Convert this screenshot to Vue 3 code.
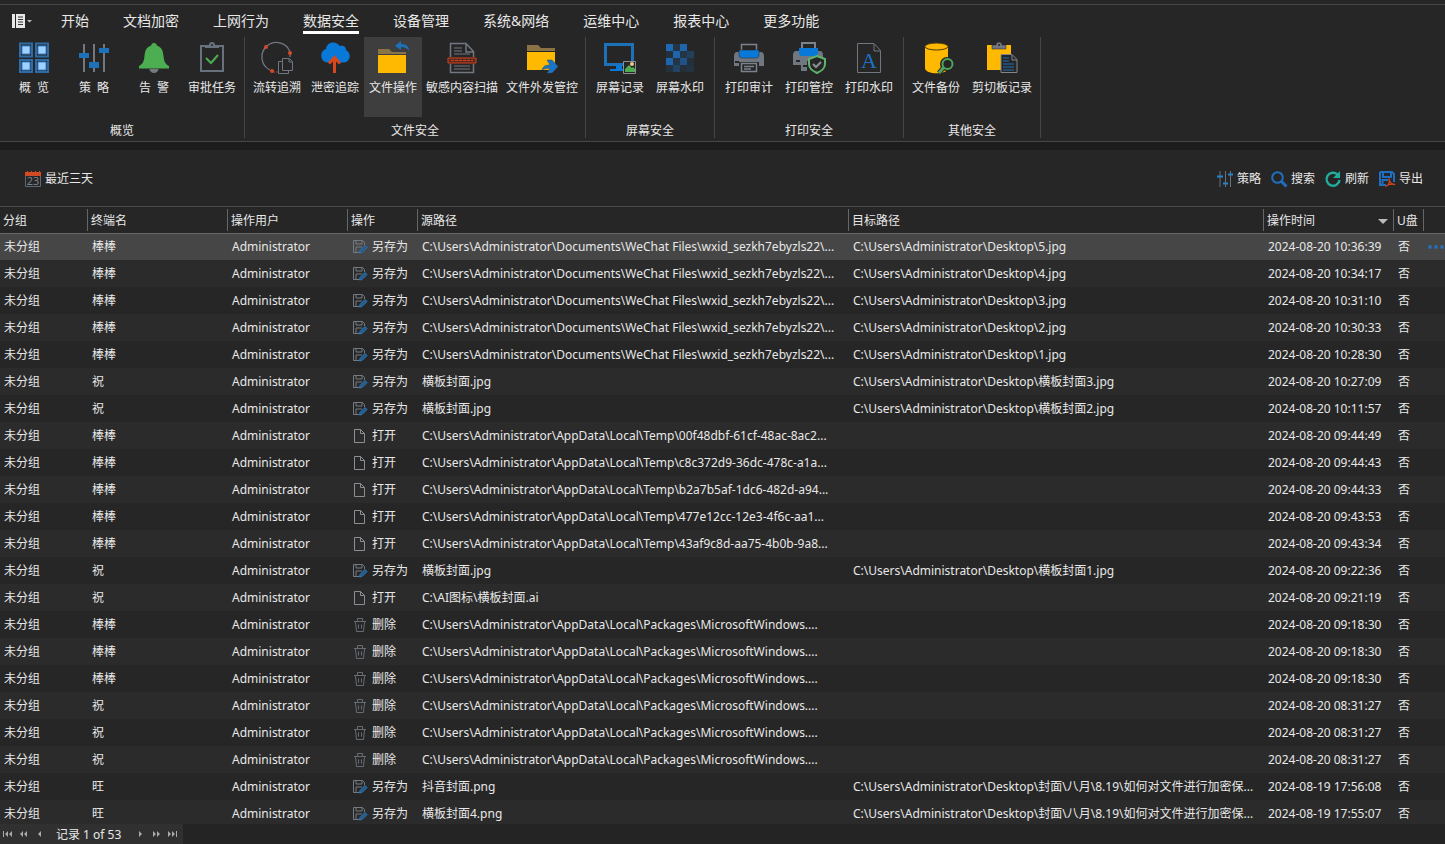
<script setup>
import { ref } from 'vue'

const tabs = ['开始', '文档加密', '上网行为', '数据安全', '设备管理', '系统&网络', '运维中心', '报表中心', '更多功能']
const activeTab = ref('数据安全')
const activeTool = ref('文件操作')

const groups = [
  {
    name: '概览', pad: 'pad-4',
    items: [
      { label: '概  览', icon: 'overview', size: 'normal' },
      { label: '策  略', icon: 'policy', size: 'normal' },
      { label: '告  警', icon: 'bell', size: 'normal' },
      { label: '审批任务', icon: 'task', size: 'small' }
    ]
  },
  {
    name: '文件安全', pad: 'pad-3',
    items: [
      { label: '流转追溯', icon: 'flow', size: 'compact' },
      { label: '泄密追踪', icon: 'cloud', size: 'compact' },
      { label: '文件操作', icon: 'folder', size: 'compact' },
      { label: '敏感内容扫描', icon: 'scan', size: 'wide' },
      { label: '文件外发管控', icon: 'send', size: 'wide' }
    ]
  },
  {
    name: '屏幕安全', pad: 'pad-4',
    items: [
      { label: '屏幕记录', icon: 'screen', size: 'normal' },
      { label: '屏幕水印', icon: 'mosaic', size: 'normal' }
    ]
  },
  {
    name: '打印安全', pad: 'pad-4',
    items: [
      { label: '打印审计', icon: 'printer', size: 'normal' },
      { label: '打印管控', icon: 'printguard', size: 'normal' },
      { label: '打印水印', icon: 'printmark', size: 'normal' }
    ]
  },
  {
    name: '其他安全', pad: 'pad-2',
    items: [
      { label: '文件备份', icon: 'backup', size: 'normal' },
      { label: '剪切板记录', icon: 'clipboard', size: 'medium' }
    ]
  }
]

const desktop = 'C:\\Users\\Administrator\\Desktop\\'
const wechat = 'C:\\Users\\Administrator\\Documents\\WeChat Files\\wxid_sezkh7ebyzls22\\...'
const temp = 'C:\\Users\\Administrator\\AppData\\Local\\Temp\\'
const pkg = 'C:\\Users\\Administrator\\AppData\\Local\\Packages\\MicrosoftWindows....'
const longTarget = desktop + '封面\\八月\\8.19\\如何对文件进行加密保...'

const rows = [
  ['棒棒', '另存为', wechat, desktop + '5.jpg', '2024-08-20 10:36:39'],
  ['棒棒', '另存为', wechat, desktop + '4.jpg', '2024-08-20 10:34:17'],
  ['棒棒', '另存为', wechat, desktop + '3.jpg', '2024-08-20 10:31:10'],
  ['棒棒', '另存为', wechat, desktop + '2.jpg', '2024-08-20 10:30:33'],
  ['棒棒', '另存为', wechat, desktop + '1.jpg', '2024-08-20 10:28:30'],
  ['祝', '另存为', '横板封面.jpg', desktop + '横板封面3.jpg', '2024-08-20 10:27:09'],
  ['祝', '另存为', '横板封面.jpg', desktop + '横板封面2.jpg', '2024-08-20 10:11:57'],
  ['棒棒', '打开', temp + '00f48dbf-61cf-48ac-8ac2...', '', '2024-08-20 09:44:49'],
  ['棒棒', '打开', temp + 'c8c372d9-36dc-478c-a1a...', '', '2024-08-20 09:44:43'],
  ['棒棒', '打开', temp + 'b2a7b5af-1dc6-482d-a94...', '', '2024-08-20 09:44:33'],
  ['棒棒', '打开', temp + '477e12cc-12e3-4f6c-aa1...', '', '2024-08-20 09:43:53'],
  ['棒棒', '打开', temp + '43af9c8d-aa75-4b0b-9a8...', '', '2024-08-20 09:43:34'],
  ['祝', '另存为', '横板封面.jpg', desktop + '横板封面1.jpg', '2024-08-20 09:22:36'],
  ['祝', '打开', 'C:\\AI图标\\横板封面.ai', '', '2024-08-20 09:21:19'],
  ['棒棒', '删除', pkg, '', '2024-08-20 09:18:30'],
  ['棒棒', '删除', pkg, '', '2024-08-20 09:18:30'],
  ['棒棒', '删除', pkg, '', '2024-08-20 09:18:30'],
  ['祝', '删除', pkg, '', '2024-08-20 08:31:27'],
  ['祝', '删除', pkg, '', '2024-08-20 08:31:27'],
  ['祝', '删除', pkg, '', '2024-08-20 08:31:27'],
  ['旺', '另存为', '抖音封面.png', longTarget, '2024-08-19 17:56:08'],
  ['旺', '另存为', '横板封面4.png', longTarget, '2024-08-19 17:55:07']
]
const selected = ref(0)

const mosaic = [
  [2, 2, 0.9], [16, 2, 0.85], [9, 2, 0.2], [9, 9, 0.85], [23, 9, 0.35], [2, 9, 0.15], [16, 9, 0.2],
  [2, 16, 0.85], [16, 16, 0.6], [9, 16, 0.2], [23, 16, 0.12],
  [9, 23, 0.4], [23, 23, 0.18], [2, 23, 0.15], [16, 23, 0.12]
]
</script>

<template>
  <div class="app">
    <header class="ribbon">
      <nav class="tabs">
        <button class="menu" type="button" aria-label="菜单">
          <svg width="20" height="14" viewBox="0 0 20 14">
            <path d="M0 0h3v14H0zM4 0h9v14H4z" fill="#e8e8e8" />
            <path d="M6 3h5M6 5.5h5M6 8h5M6 10.5h5" stroke="#333" />
            <path d="M15 6h5l-2.500 2.500z" fill="#bbb" />
          </svg>
        </button>
        <button v-for="t in tabs" :key="t" type="button" class="tab" :class="{ active: t === activeTab }" @click="activeTab = t">{{ t }}</button>
      </nav>
      <div class="groups">
        <section v-for="g in groups" :key="g.name" class="group" :class="g.pad">
          <div class="items">
            <button v-for="i in g.items" :key="i.label" type="button" class="item" :class="[i.size, { on: i.label === activeTool }]" @click="activeTool = i.label">
              <svg width="32" height="32" viewBox="0 0 32 32" fill="none" aria-hidden="true">
                <g v-if="i.icon === 'overview'">
                  <path d="M2 1.500h12v13H2zM18 1.500h12v13H18zM2 18h12v12H2zM18 18h12v12H18z" stroke="#2d6ca8" stroke-width="2" />
                  <path d="M4 4h8v8H4zM20 4h8v8h-8zM4 20h8v8H4zM20 20h8v8h-8z" fill="#9fd0ff" stroke="#3c86cc" />
                </g>
                <g v-else-if="i.icon === 'policy'">
                  <path d="M6 2v28M16 2v28M26 2v28" stroke="#727780" stroke-width="2" />
                  <path d="M1 11h10v5H1zM11 20h10v6H11zM21 6h10v5H21z" fill="#1d71b8" />
                </g>
                <g v-else-if="i.icon === 'bell'">
                  <path d="M11.500 27h9a4.500 4 0 0 1-9 0z" fill="#727780" />
                  <path d="M16 1c2 0 2.600 1 2.800 2.400C24 5 25 9 25.500 14c.5 5 1.500 8 5.500 10v2.500H1V24c4-2 5-5 5.500-10C7 9 8 5 13.200 3.400 13.400 2 14 1 16 1z" fill="#4cae50" />
                </g>
                <g v-else-if="i.icon === 'task'">
                  <path d="M5 4h22v25H5z" stroke="#68717e" stroke-width="2" />
                  <path d="M9 6V3h4a3 3 0 0 1 6 0h4v3z" fill="#68717e" />
                  <circle cx="16" cy="3" r="1" fill="#262626" />
                  <path d="M10 16l5 5 7-8" stroke="#4cae50" stroke-width="2" />
                </g>
                <g v-else-if="i.icon === 'flow'">
                  <path d="M9 28A14.500 14.500 0 1 1 29 10M29 11v4" stroke="#707780" stroke-width="1.300" />
                  <path d="M12 30h5M29 12v3" stroke="#8c4b3b" stroke-dasharray="2 1" />
                  <circle cx="5" cy="5" r="2" fill="#d34a2b" /><circle cx="29" cy="11" r="2" fill="#d34a2b" /><circle cx="11" cy="29" r="2" fill="#d34a2b" />
                  <path d="M21.500 16.500h7l3 3v9h-10zM28 17v3h3M21 19.500h-3.500v12h10V29" stroke="#707780" />
                </g>
                <g v-else-if="i.icon === 'cloud'">
                  <path d="M8 20.500a7 7 0 0 1-1-13.500C8-1 18-1 20.500 4c5-1 6.500 1.500 6.500 4 6 3 4.500 12-2 12.500h-4L15.500 14l-5.500 6.500z" fill="#0879d8" />
                  <path d="M15.500 31V17M10 21.500l5.500-6 5.500 6" stroke="#d9481d" stroke-width="3" />
                </g>
                <g v-else-if="i.icon === 'folder'">
                  <path d="M1 7h11l3 3h14v2H1z" fill="#8a7345" />
                  <path d="M1 13h28v18H1z" fill="#ffb900" />
                  <path d="M18 4l6-5v3c6 0 8 3 8 7-2-3-4-4-8-4v3z" fill="#1d71b8" />
                </g>
                <g v-else-if="i.icon === 'scan'">
                  <path d="M4.500 15V1.500H20l7.500 8V15M20 2v8h7M4.500 22v8.500h23V22" stroke="#707780" stroke-width="1.500" />
                  <path d="M8 6h8M8 9h8M8 12h16M8 24h16M8 27h16" stroke="#707780" />
                  <path d="M2 16h28v5H2z" fill="#59291f" stroke="#d3451f" />
                  <path d="M5 18.500h22" stroke="#d3451f" stroke-dasharray="3 1" />
                </g>
                <g v-else-if="i.icon === 'send'">
                  <path d="M1 3h11l3 3h14v3H1z" fill="#8a7345" />
                  <path d="M1 10h28v18H1z" fill="#ffb900" />
                  <path d="M16 28c1-4 4-5 8-5l-3-5h5l6 6.500-6 6.500h-5l3-4c-4-1-6 0-8 1z" fill="#1976c8" stroke="#39495a" stroke-width=".5" />
                </g>
                <g v-else-if="i.icon === 'screen'">
                  <path d="M1.500 2.500h27v20h-27z" stroke="#1d71b8" stroke-width="3" />
                  <path d="M12 23h6v4h3v2H6v-2h6z" fill="#0879d8" />
                  <path d="M19.500 19.500h12v12h-12z" fill="#262626" stroke="#8c9096" />
                  <path d="M21 30v-3l4-4 3 3 1-1 2 2v3z" fill="#4cae50" /><circle cx="28" cy="22" r="2" fill="#f0c98a" />
                </g>
                <g v-else-if="i.icon === 'mosaic'">
                  <rect v-for="m in mosaic" :key="m.join()" :x="m[0]" :y="m[1]" width="7" height="7" fill="#1d71c4" :opacity="m[2]" />
                </g>
                <g v-else-if="i.icon === 'printer'">
                  <path d="M8.500 9V2.500h15V9" stroke="#7c828b" stroke-width="1.500" />
                  <path d="M4 10h24c2 0 3 2 3 4v10h-5v-4H6v4H1V14c0-2 1-4 3-4z" fill="#707780" />
                  <path d="M6 8h20v5c0 2-1 3-3 3H9c-2 0-3-1-3-3z" fill="#0879d8" stroke="#262626" stroke-width=".5" />
                  <path d="M8.500 21.500h15v8h-15zM11 24.500h10M11 27h7" stroke="#7c828b" stroke-width="1.500" />
                  <path d="M2 19h4v2H2z" fill="#262626" />
                </g>
                <g v-else-if="i.icon === 'printguard'">
                  <path d="M9 1h13v6H9z" stroke="#7c828b" stroke-width="2" />
                  <path d="M3 9h24c2 0 3 2 3 4v6H14v10H8v-6H0V13c0-2 1-4 3-4z" fill="#707780" />
                  <path d="M6 6h19v5c0 2-1 3-3 3H9c-2 0-3-1-3-3z" fill="#0879d8" />
                  <path d="M3 18h4v2H3zM10 23h4v2h-4z" fill="#262626" />
                  <path d="M24 14l8 3v5c0 5-4 7-8 9-4-2-8-4-8-9v-5z" fill="#262626" stroke="#5fb36a" stroke-width="2" />
                  <path d="M20 22l3 3 5-5" stroke="#8a9098" stroke-width="2" />
                </g>
                <g v-else-if="i.icon === 'printmark'">
                  <path d="M4.500 1.500H21l6.500 7v22h-23zM21 2v7h6" stroke="#707780" />
                  <text x="16" y="26" text-anchor="middle" class="glyph-a">A</text>
                </g>
                <g v-else-if="i.icon === 'backup'">
                  <path d="M5 4v22c0 7 23 7 23 0V4z" fill="#ffb900" />
                  <ellipse cx="16.500" cy="4.500" rx="11.500" ry="3.500" fill="#ffb900" stroke="#4c3b10" />
                  <circle cx="27" cy="22" r="7" fill="#262626" />
                  <path d="M19 31l5-6" stroke="#262626" stroke-width="5" />
                  <circle cx="27.500" cy="22" r="5" stroke="#4fa45a" stroke-width="2" />
                  <path d="M19 31l5-6" stroke="#4fa45a" stroke-width="3" />
                </g>
                <g v-else>
                  <path d="M1 3h24v25H1z" fill="#ffb900" />
                  <path d="M6 7V3h4a3 3 0 0 1 6 0h4v4z" fill="#707780" stroke="#262626" stroke-width=".5" /><circle cx="13" cy="3" r="1" fill="#262626" />
                  <path d="M15 12.500h11l5 5v13H15z" fill="#262626" stroke="#80868e" />
                  <path d="M26 13v5h5" stroke="#80868e" />
                  <path d="M17 16h6M17 19h6M17 22h11M17 25h11M17 28h11" stroke="#1d71b8" />
                </g>
              </svg>
              <span>{{ i.label }}</span>
            </button>
          </div>
          <h2>{{ g.name }}</h2>
        </section>
      </div>
    </header>

    <div class="toolbar">
      <button type="button" class="tool">
        <svg width="16" height="16" viewBox="0 0 16 16" fill="none">
          <path d="M.5 4v11.500h15V4" stroke="#5c6775" />
          <path d="M0 1h2V0h1v1h3V0h1v1h3V0h1v1h3V0h1v1h1v4H0z" fill="#cf4a25" />
          <text x="8" y="14" text-anchor="middle" class="glyph-day">23</text>
        </svg>
        最近三天
      </button>
      <div class="actions">
        <button type="button" class="tool">
          <svg width="16" height="16" viewBox="0 0 16 16" fill="none">
            <path d="M3 0v16M8.500 0v16M13.500 0v16" stroke="#69717b" />
            <path d="M0 5.500h6M6 12.500h5M11 3.500h5" stroke="#2385d0" stroke-width="2" />
          </svg>策略
        </button>
        <button type="button" class="tool">
          <svg width="16" height="16" viewBox="0 0 16 16" fill="none" stroke="#1f6fc0">
            <circle cx="6.500" cy="6.500" r="5.300" stroke-width="2" /><path d="M10.500 10.500l5 5" stroke-width="3" />
          </svg>搜索
        </button>
        <button type="button" class="tool">
          <svg width="16" height="16" viewBox="0 0 16 16" fill="none">
            <path d="M12.500 3.500A6.500 6.500 0 1 0 14.500 9" stroke="#1fae9c" stroke-width="2.400" /><path d="M15 0v7H8z" fill="#1fae9c" />
          </svg>刷新
        </button>
        <button type="button" class="tool">
          <svg width="16" height="16" viewBox="0 0 16 16" fill="none">
            <path d="M1 1h12l2 2v8M1 1v13h6M4 1v5h8V1M3.500 14V9H9" stroke="#1f6fc0" stroke-width="2" />
            <path d="M6.500 15.500c3-1 4.500-4 3.500-8 .5 4 2.500 6 6 6-4-1-7 0-9.500 2z" stroke="#d3451f" stroke-width="1.300" />
          </svg>导出
        </button>
      </div>
    </div>

    <main class="grid">
      <table>
        <colgroup>
          <col class="c-group"><col class="c-host"><col class="c-user"><col class="c-op"><col class="c-src"><col><col class="c-time"><col class="c-usb"><col class="c-more">
        </colgroup>
        <thead>
          <tr>
            <th><span>分组</span></th>
            <th><span>终端名</span></th>
            <th><span>操作用户</span></th>
            <th><span>操作</span></th>
            <th><span>源路径</span></th>
            <th><span>目标路径</span></th>
            <th aria-sort="descending"><span>操作时间<i class="sort"></i></span></th>
            <th><span>U盘</span></th>
            <td></td>
          </tr>
        </thead>
        <tbody>
          <tr v-for="(r, n) in rows" :key="n" :class="{ selected: n === selected }" @click="selected = n">
            <td>未分组</td>
            <td>{{ r[0] }}</td>
            <td>Administrator</td>
            <td>
              <div class="op">
                <svg width="14" height="14" viewBox="0 0 14 14" fill="none" aria-hidden="true">
                  <g v-if="r[1] === '另存为'">
                    <path d="M6 12.500H.5V.5h9l2 2V5M3 .5V4h6V.5M3 12V7h6" stroke="#747a82" />
                    <path d="M6.500 13l.5-2.500 5-5 2 2-5 5z" fill="#245b8c" stroke="#2d78bb" />
                  </g>
                  <path v-else-if="r[1] === '打开'" d="M1.500.5h6l4 4v9h-10zM7.500.5v4h4" stroke="#8b8f94" />
                  <path v-else d="M1 3.500h12M4.500 3V.5h5V3M2.500 4l1 9.500h7l1-9.500M5.500 6.500v4M8.500 6.500v4" stroke="#666c74" />
                </svg>
                {{ r[1] }}
              </div>
            </td>
            <td>{{ r[2] }}</td>
            <td>{{ r[3] }}</td>
            <td>{{ r[4] }}</td>
            <td>否</td>
            <td class="more-cell">
              <button v-if="n === selected" type="button" class="more" aria-label="更多"><i></i><i></i><i></i></button>
            </td>
          </tr>
        </tbody>
      </table>
    </main>

    <footer class="pager">
      <div class="pager-box">
        <button type="button" aria-label="首条"><svg width="10" height="8" viewBox="0 0 10 8"><path d="M0 1h1v6H0zM5 1v6L2 4zM9 1v6L6 4z" /></svg></button>
        <button type="button" aria-label="上一页"><svg width="10" height="8" viewBox="0 0 10 8"><path d="M4 1v6L1 4zM8 1v6L5 4z" /></svg></button>
        <button type="button" aria-label="上一条"><svg width="10" height="8" viewBox="0 0 10 8"><path d="M6 1v6L3 4z" /></svg></button>
        <span>记录 1 of 53</span>
        <button type="button" aria-label="下一条"><svg width="10" height="8" viewBox="0 0 10 8"><path d="M4 1v6l3-3z" /></svg></button>
        <button type="button" aria-label="下一页"><svg width="10" height="8" viewBox="0 0 10 8"><path d="M2 1v6l3-3zM6 1v6l3-3z" /></svg></button>
        <button type="button" aria-label="末条"><svg width="10" height="8" viewBox="0 0 10 8"><path d="M1 1v6l3-3zM5 1v6l3-3zM9 1h1v6H9z" /></svg></button>
      </div>
    </footer>
  </div>
</template>

<style>
body { margin: 0; background: #262626; }
</style>

<style scoped>
.app {
  display: flex;
  flex-direction: column;
  height: 100vh;
  box-sizing: border-box;
  padding-top: 4px;
  overflow: hidden;
  background: #262626;
  color: #e8e8e8;
  font: 12px/16px "Noto Sans", "Noto Sans CJK SC", sans-serif;
}
button {
  margin: 0;
  padding: 0;
  border: 0;
  background: none;
  color: inherit;
  font: inherit;
  cursor: pointer;
}
svg { display: block; flex: none; overflow: visible; }

.ribbon {
  flex: none;
  border-top: 1px solid #484848;
  border-bottom: 1px solid #484848;
}
.tabs {
  display: flex;
  align-items: flex-start;
  gap: 34px;
  height: 32px;
  padding-left: 12px;
}
.menu { width: 20px; padding-top: 9px; margin-right: -5px; }
.tab {
  height: 29px;
  padding-top: 6px;
  box-sizing: border-box;
  border-bottom: 3px solid transparent;
  font-size: 14px;
  line-height: 20px;
  white-space: nowrap;
}
.tab.active { border-color: #fff; }

.groups { display: flex; height: 104px; }
.group {
  display: flex;
  flex-direction: column;
  height: 101px;
  border-right: 1px solid #454545;
}
.pad-4 { padding: 0 4px; }
.pad-3 { padding: 0 3px; }
.pad-2 { padding: 0 2px; }
.items { display: flex; }
.item {
  display: flex;
  flex-direction: column;
  align-items: center;
  gap: 6px;
  height: 80px;
  padding-top: 5px;
  box-sizing: border-box;
  justify-content: flex-start;
  white-space: pre;
}
.item.on { background: #3e3e3e; }
.normal { width: 60px; }
.small { width: 56px; }
.compact { width: 58px; }
.medium { width: 72px; }
.wide { width: 80px; }
.group h2 {
  margin: 6px 0 0;
  font-size: 12px;
  font-weight: 400;
  line-height: 16px;
  text-align: center;
}
.glyph-a { fill: #1d71c4; font: 22px "Liberation Serif", serif; }
.glyph-day { fill: #7c828b; font: 11px "Noto Sans", sans-serif; }

.toolbar {
  display: flex;
  flex: none;
  align-items: center;
  justify-content: space-between;
  box-sizing: border-box;
  height: 64px;
  padding: 2px 22px 0 25px;
  border-top: 8px solid #1c1c1c;
}
.tool { display: flex; align-items: center; gap: 4px; white-space: nowrap; }
.actions { display: flex; gap: 10px; }

.grid { flex: 1; min-height: 0; overflow: hidden; border-top: 1px solid #4a4a4a; }
table { width: 100%; table-layout: fixed; border-collapse: collapse; }
.c-group { width: 88px; }
.c-host { width: 140px; }
.c-user { width: 120px; }
.c-op { width: 70px; }
.c-src { width: 431px; }
.c-time { width: 130px; }
.c-usb { width: 30px; }
.c-more { width: 21px; }
th { height: 26px; padding: 0; font-weight: 400; text-align: left; white-space: nowrap; }
th span {
  display: flex;
  align-items: center;
  justify-content: space-between;
  box-sizing: border-box;
  height: 22px;
  padding: 2px 5px 0 3px;
  border-right: 1px solid #666;
}
.sort { border: 5px solid transparent; border-top-color: #bbb; border-bottom: 0; }
tbody td { height: 27px; padding: 0 0 0 4px; white-space: nowrap; }
tbody tr:nth-child(even) { background: #2b2b2b; }
tbody tr.selected { background: #464646; box-shadow: inset 0 1px #666; }
.op { display: flex; align-items: center; gap: 5px; padding-left: 1px; }
.more { display: flex; gap: 2px; }
.more i { width: 4px; height: 4px; border-radius: 50%; background: #2b6cab; }

.pager { flex: none; background: #242424; }
.pager-box {
  display: flex;
  align-items: center;
  width: max-content;
  height: 20px;
  padding-left: 3px;
  background: #303030;
}
.pager-box button { width: 16px; fill: #aaa; }
.pager-box span { padding: 1px 14px 0 5px; }
</style>
